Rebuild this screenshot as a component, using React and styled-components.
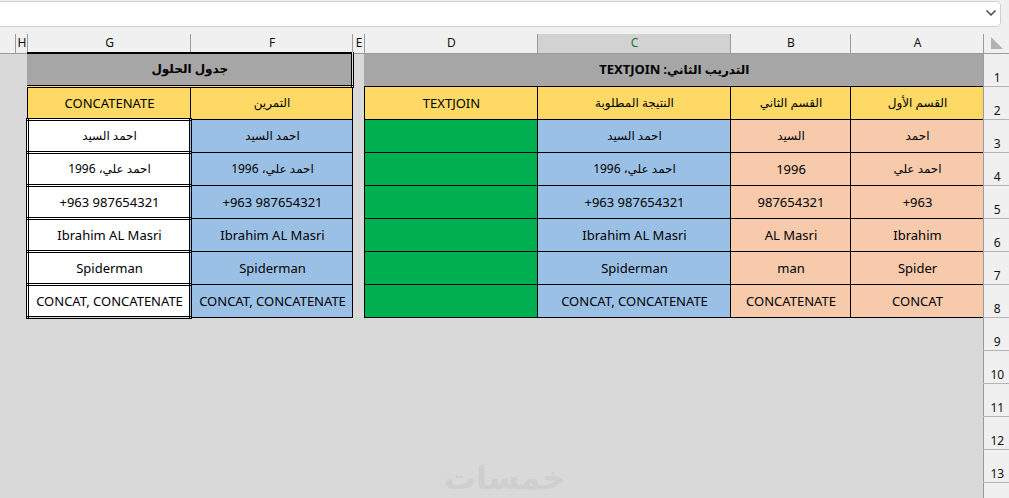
import React, { useState } from 'react'
import styled, { createGlobalStyle } from 'styled-components'

const colors = {
  chrome: '#f0f0f0',
  sheet: '#d9d9d9',
  line: '#9b9b9b',
  grey: '#a6a6a6',
  yellow: '#ffd966',
  blue: '#9bc0e6',
  peach: '#f7caac',
  green: '#00b050',
  white: '#ffffff',
}

const GlobalStyle = createGlobalStyle`
  * {
    box-sizing: border-box;
  }
  body {
    margin: 0;
    background: ${colors.sheet};
  }
`

const Page = styled.main`
  position: relative;
  display: flex;
  flex-direction: column;
  height: 100vh;
  overflow: hidden;
  background: ${colors.sheet};
  color: #000;
  font-family: 'Noto Sans', 'DejaVu Sans', sans-serif;
`

const Toolbar = styled.header`
  flex: none;
  padding: 1px 8px 7px 0;
  background: ${colors.chrome};
`

const FormulaBar = styled.div`
  display: flex;
  height: 26px;
  background: #fff;
  border: 1px solid #d0d0d0;
  border-left: 0;
  border-radius: 0 5px 5px 0;
`

const FormulaInput = styled.input`
  flex: 1;
  min-width: 0;
  padding: 0 8px;
  border: 0;
  outline: 0;
  background: transparent;
  font: inherit;
`

const ExpandButton = styled.button`
  display: flex;
  justify-content: center;
  width: 18px;
  padding: 6px 0 0;
  border: 0;
  background: transparent;
`

const Sheet = styled.table`
  width: 100%;
  table-layout: fixed;
  border-collapse: collapse;
`

const Col = styled.col`
  width: ${(props) => props.$width}px;
`

const ColumnHead = styled.th`
  height: 19px;
  padding: 0 0 0 2px;
  background: ${(props) => (props.$selected ? '#d2d2d2' : colors.chrome)};
  border-left: 1px solid ${colors.line};
  border-bottom: 1px solid ${colors.line};
  color: ${(props) => (props.$selected ? '#217346' : '#111')};
  font-size: 12px;
  font-weight: 400;
  line-height: 16px;

  &:last-child {
    border-left: 0;
  }
`

const RowHead = styled.th`
  height: 33px;
  padding: 0 0 0 2px;
  background: ${colors.chrome};
  border-left: 1px solid ${colors.line};
  border-bottom: 1px solid #b4b4b4;
  color: #111;
  font-size: 12px;
  font-weight: 400;
  line-height: 16px;
  vertical-align: bottom;
`

const Corner = styled(ColumnHead)`
  line-height: 0;
`

const Cell = styled.td`
  height: 33px;
  padding: 0 0 0 2px;
  background: ${(props) => colors[props.$fill]};
  border-left: 1px solid #000;
  border-bottom: 1px solid #000;
  font-size: ${(props) => (props.$arabic ? 12 : 13)}px;
  line-height: 18px;
  text-align: center;
  white-space: nowrap;
`

const AnswerCell = styled(Cell)`
  border: 3px double #000;
`

const TitleCell = styled(Cell)`
  border-left: 0;
  font-weight: 700;
`

const Latin = styled.span`
  font-size: 13px;
`

const SolutionTitle = styled(TitleCell)`
  border-top: 2px solid #000;
  border-right: 3px double #000;
  border-bottom: 3px double #000;
`

const Gap = styled.td`
  padding: 0;
  border-left: ${(props) => (props.$edge ? '1px solid #000' : '0')};
`

const Watermark = styled.div`
  position: absolute;
  bottom: 0;
  left: 50%;
  transform: translateX(-50%);
  color: #cfcfcf;
  font-family: 'DejaVu Sans', sans-serif;
  font-size: 32px;
  font-weight: 700;
  line-height: 40px;
  pointer-events: none;
`

const widths = [26, 133, 120, 193, 173, 12, 162, 163, 12]
const letters = ['A', 'B', 'C', 'D', 'E', 'F', 'G', 'H']

const rows = [
  ['احمد', 'السيد', 'احمد السيد'],
  ['احمد علي', '1996', 'احمد علي، 1996'],
  ['+963', '987654321', '+963 987654321'],
  ['Ibrahim', 'AL Masri', 'Ibrahim AL Masri'],
  ['Spider', 'man', 'Spiderman'],
  ['CONCAT', 'CONCATENATE', 'CONCAT, CONCATENATE'],
]

const emptyRows = [9, 10, 11, 12, 13]

// the Arabic fallback face runs large next to the Latin one
const isArabic = (text) => /[\u0600-\u06ff]/.test(text)

function TextCell({ as: Component = Cell, fill, children }) {
  return (
    <Component dir="auto" $fill={fill} $arabic={isArabic(children)}>
      {children}
    </Component>
  )
}

export default function App() {
  const [formula, setFormula] = useState('')

  return (
    <>
      <GlobalStyle />
      <Page>
        <Toolbar>
          <FormulaBar>
            <FormulaInput
              aria-label="Formula"
              value={formula}
              onChange={(e) => setFormula(e.target.value)}
            />
            <ExpandButton type="button" aria-label="Expand formula bar">
              <svg width="12" height="10" viewBox="0 0 12 10">
                <path
                  d="M1.5 2.5 L6 7 L10.5 2.5"
                  fill="none"
                  stroke="#444"
                  strokeWidth="1.5"
                />
              </svg>
            </ExpandButton>
          </FormulaBar>
        </Toolbar>

        <Sheet dir="rtl">
          <colgroup>
            {widths.map((width, i) => (
              <Col key={i} $width={width} />
            ))}
            <col />
          </colgroup>
          <thead>
            <tr>
              <Corner>
                <svg width="12" height="12" viewBox="0 0 12 12">
                  <path d="M0 0 L12 12 H0 Z" fill="#b2b2b2" />
                </svg>
              </Corner>
              {letters.map((letter) => (
                <ColumnHead key={letter} scope="col" $selected={letter === 'C'}>
                  {letter}
                </ColumnHead>
              ))}
              <ColumnHead />
            </tr>
          </thead>
          <tbody>
            <tr>
              <RowHead scope="row">1</RowHead>
              <TitleCell colSpan={4} $fill="grey" $arabic>
                التدريب الثاني: <Latin>TEXTJOIN</Latin>
              </TitleCell>
              <Gap />
              <SolutionTitle colSpan={2} $fill="grey" $arabic>
                جدول الحلول
              </SolutionTitle>
              <Gap />
              <Gap />
            </tr>
            <tr>
              <RowHead scope="row">2</RowHead>
              <TextCell fill="yellow">القسم الأول</TextCell>
              <TextCell fill="yellow">القسم الثاني</TextCell>
              <TextCell fill="yellow">النتيجة المطلوبة</TextCell>
              <TextCell fill="yellow">TEXTJOIN</TextCell>
              <Gap $edge />
              <TextCell fill="yellow">التمرين</TextCell>
              <TextCell fill="yellow">CONCATENATE</TextCell>
              <Gap />
              <Gap />
            </tr>
            {rows.map(([first, second, result], i) => (
              <tr key={result}>
                <RowHead scope="row">{i + 3}</RowHead>
                <TextCell fill="peach">{first}</TextCell>
                <TextCell fill="peach">{second}</TextCell>
                <TextCell fill="blue">{result}</TextCell>
                <Cell $fill="green" />
                <Gap $edge />
                <TextCell fill="blue">{result}</TextCell>
                <TextCell as={AnswerCell} fill="white">
                  {result}
                </TextCell>
                <Gap />
                <Gap />
              </tr>
            ))}
            {emptyRows.map((n) => (
              <tr key={n}>
                <RowHead scope="row">{n}</RowHead>
                <Gap colSpan={9} />
              </tr>
            ))}
            <tr>
              <RowHead />
              <Gap colSpan={9} />
            </tr>
          </tbody>
        </Sheet>

        <Watermark>خمسات</Watermark>
      </Page>
    </>
  )
}
